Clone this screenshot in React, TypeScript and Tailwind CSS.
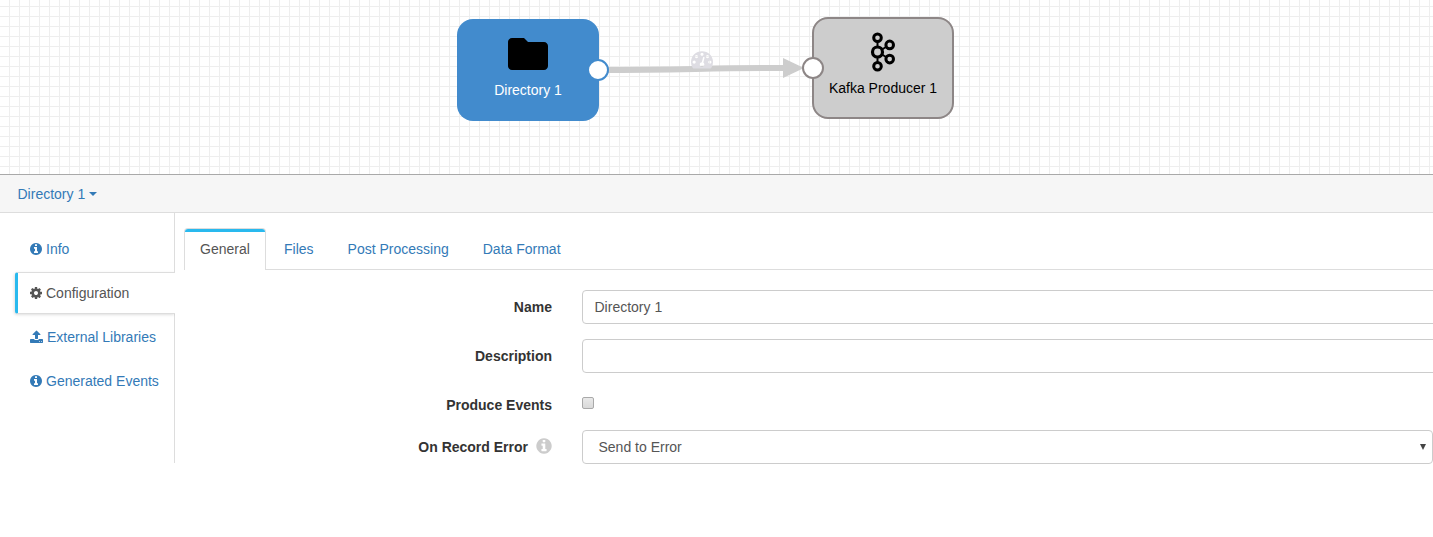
import React from "react";

const ICONS = {
  info: {
    box: "128 0 1536 1792",
    d: "M1152 1376v-160q0-14-9-23t-23-9h-96v-512q0-14-9-23t-23-9h-320q-14 0-23 9t-9 23v160q0 14 9 23t23 9h96v320h-96q-14 0-23 9t-9 23v160q0 14 9 23t23 9h448q14 0 23-9t9-23zm-128-896v-160q0-14-9-23t-23-9h-192q-14 0-23 9t-9 23v160q0 14 9 23t23 9h192q14 0 23-9t9-23zm640 416q0 209-103 385.500t-279.500 279.500-385.500 103-385.500-103-279.500-279.500-103-385.500 103-385.500 279.500-279.500 385.500-103 385.500 103 279.500 279.500 103 385.500z",
  },
  cog: {
    box: "128 0 1536 1792",
    d: "M1152 896q0-106-75-181t-181-75-181 75-75 181 75 181 181 75 181-75 75-181zm512-109v222q0 12-8 23t-20 13l-185 28q-19 54-39 91 35 50 107 138 10 12 10 25t-9 23q-27 37-99 108t-94 71q-12 0-26-9l-138-108q-44 23-91 38-16 136-29 186-7 28-36 28h-222q-14 0-24.500-8.500t-11.500-21.500l-28-184q-49-16-90-37l-141 107q-10 9-25 9-14 0-25-11-126-114-165-168-7-10-7-23 0-12 8-23 15-21 51-66.500t54-70.500q-27-50-41-99l-183-27q-13-2-21-12.500t-8-23.500v-222q0-12 8-23t19-13l186-28q14-46 39-92-40-57-107-138-10-12-10-24 0-10 9-23 26-36 98.500-107.500t94.500-71.500q13 0 26 10l138 107q44-23 91-38 16-136 29-186 7-28 36-28h222q14 0 24.500 8.500t11.500 21.500l28 184q49 16 90 37l142-107q9-9 24-9 13 0 25 10 129 119 165 170 7 8 7 22 0 12-8 23-15 21-51 66.500t-54 70.500q26 50 41 98l183 28q13 2 21 12.500t8 23.500z",
  },
  upload: {
    box: "64 0 1664 1792",
    d: "M1344 1472q0-26-19-45t-45-19-45 19-19 45 19 45 45 19 45-19 19-45zm256 0q0-26-19-45t-45-19-45 19-19 45 19 45 45 19 45-19 19-45zm128-224v320q0 40-28 68t-68 28h-1472q-40 0-68-28t-28-68v-320q0-40 28-68t68-28h427q21 56 70.500 92t110.500 36h256q61 0 110.500-36t70.500-92h427q40 0 68 28t28 68zm-325-648q-17 40-59 40h-256v448q0 26-19 45t-45 19h-256q-26 0-45-19t-19-45v-448h-256q-42 0-59-40-17-39 14-69l448-448q18-19 45-19t45 19l448 448q31 30 14 69z",
  },
  gauge: {
    box: "0 0 1792 1792",
    d: "M384 1152q0-53-37.500-90.500t-90.500-37.500-90.500 37.500-37.500 90.500 37.500 90.500 90.500 37.500 90.500-37.500 37.500-90.500zm192-448q0-53-37.500-90.500t-90.500-37.500-90.500 37.500-37.500 90.500 37.500 90.500 90.500 37.500 90.500-37.500 37.500-90.500zm428 481l101-382q6-26-7.500-48.500t-38.500-29.500-48 6.500-30 39.500l-101 382q-60 5-107 43.500t-63 98.500q-20 77 20 146t117 89 146-20 89-117q16-60-6-117t-72-91zm660-33q0-53-37.500-90.500t-90.500-37.500-90.500 37.500-37.500 90.500 37.500 90.500 90.500 37.500 90.500-37.500 37.500-90.500zm-640-640q0-53-37.500-90.500t-90.500-37.500-90.500 37.500-37.500 90.500 37.500 90.500 90.500 37.500 90.500-37.500 37.500-90.500zm448 192q0-53-37.500-90.500t-90.500-37.500-90.500 37.500-37.500 90.500 37.500 90.500 90.500 37.500 90.500-37.500 37.500-90.500zm320 448q0 261-141 483-19 29-54 29h-1402q-35 0-54-29-141-221-141-483 0-182 71-348t191-286 286-191 348-71 348 71 286 191 191 286 71 348z",
  },
};

function Icon({ name, className }: { name: keyof typeof ICONS; className: string }) {
  return (
    <svg viewBox={ICONS[name].box} className={className} fill="currentColor">
      <path d={ICONS[name].d} />
    </svg>
  );
}

function KafkaIcon() {
  return (
    <svg viewBox="0 0 26 40" className="h-10 w-[26px]" fill="none" stroke="#000">
      <path strokeWidth="2" d="M7.500 9v6M7.500 25v6M12 17.500l4-2.500M12 22.500l4 2.500" />
      <circle cx="7.500" cy="5.700" r="3.800" strokeWidth="3" />
      <circle cx="7.500" cy="20" r="5" strokeWidth="3.200" />
      <circle cx="7.500" cy="34.200" r="3.800" strokeWidth="3" />
      <circle cx="19.700" cy="12.900" r="3.800" strokeWidth="3" />
      <circle cx="19.700" cy="27.100" r="3.800" strokeWidth="3" />
    </svg>
  );
}

function Canvas() {
  return (
    <div className="relative h-[174px] shrink-0 overflow-hidden bg-white bg-[linear-gradient(to_right,transparent_9px,#eeeeee_9px),linear-gradient(to_bottom,transparent_9px,#eeeeee_9px)] bg-[length:10px_10px] bg-[position:0_0,0_-3px]">
      <svg className="absolute left-[598px] top-[50px] h-10 w-[215px]" viewBox="598 50 215 40">
        <path d="M598 70C690 70 700 68 784 68" fill="none" stroke="#cdcdcd" strokeWidth="6" />
        <path d="M783 58L804 68L783 78z" fill="#cdcdcd" />
      </svg>
      <Icon name="gauge" className="absolute left-[691px] top-[48px] h-[22px] w-[22px] text-[#dedde3]" />

      <div className="absolute left-[457px] top-[19px] flex h-[102px] w-[142px] flex-col items-center rounded-[16px] bg-[#428bcd] pt-[11px]">
        <svg viewBox="0 0 24 24" className="h-12 w-12">
          <path d="M10 4H4c-1.100 0-1.990.9-1.990 2L2 18c0 1.100.9 2 2 2h16c1.100 0 2-.9 2-2V8c0-1.100-.9-2-2-2h-8l-2-2z" />
        </svg>
        <span className="mt-[2px] text-white">Directory 1</span>
      </div>
      <span className="absolute left-[587px] top-[59px] h-[22px] w-[22px] rounded-full border-2 border-[#428bcd] bg-white" />

      <div className="absolute left-[812px] top-[17px] flex h-[102px] w-[142px] flex-col items-center rounded-[16px] border-2 border-[#8d8686] bg-[#cdcdcd] pt-[13px] text-black">
        <KafkaIcon />
        <span className="mt-[6px]">Kafka Producer 1</span>
      </div>
      <span className="absolute left-[802px] top-[57px] h-[22px] w-[22px] rounded-full border-2 border-[#8d8686] bg-white" />
    </div>
  );
}

function SideNav() {
  return (
    <nav className="ml-[14px] flex h-[250px] w-[161px] shrink-0 flex-col text-[#337ab7]">
      <a className="flex h-[59px] items-center gap-[4px] border-r border-[#dddddd] pl-4 pt-[13px]">
        <Icon name="info" className="h-[14px] w-3" />Info
      </a>
      <a className="ml-px flex h-[42px] items-center gap-[4px] rounded-l-[3px] border-y border-l-[3px] border-y-[#dddddd] border-l-[#29b9ee] bg-white pl-3 text-[#555555] shadow-[-1px_1px_3px_rgba(0,0,0,0.13)] [clip-path:inset(-4px_0_-4px_-4px)]">
        <Icon name="cog" className="h-[14px] w-3" />Configuration
      </a>
      <div className="flex flex-1 flex-col gap-[4px] border-r border-[#dddddd] pt-[3px]">
        <a className="flex h-10 items-center gap-[4px] whitespace-nowrap pl-4">
          <Icon name="upload" className="h-[14px] w-[13px]" />External Libraries
        </a>
        <a className="flex h-10 items-center gap-[4px] whitespace-nowrap pl-4">
          <Icon name="info" className="h-[14px] w-3" />Generated Events
        </a>
      </div>
    </nav>
  );
}

function Row({ label, height, children }: { label: React.ReactNode; height: string; children: React.ReactNode }) {
  return (
    <div className={"flex " + height}>
      <label className="flex w-[368px] shrink-0 items-center justify-end font-bold text-[#333333]">{label}</label>
      <div className="ml-[30px] flex-1">{children}</div>
    </div>
  );
}

export default function App() {
  return (
    <div className="flex h-[537px] w-full flex-col overflow-hidden bg-white font-['Liberation_Sans',Arial,sans-serif] text-[14px] leading-5">
      <Canvas />
      <header className="flex h-[39px] shrink-0 items-center border-b border-t border-b-[#dddddd] border-t-[#a9a9a9] bg-[#f6f6f6] pl-[17.5px] text-[#337ab7]">
        Directory 1
        <span className="ml-[3.5px] mt-px border-x-4 border-t-4 border-x-transparent border-t-[#337ab7]" />
      </header>
      <div className="flex">
        <SideNav />
        <main className="min-w-0 flex-1 pl-[9px] pt-[15px]">
          <div className="flex h-[42px] border-b border-[#dddddd] text-[#337ab7]">
            <a className="h-[42px] w-[82px] overflow-hidden rounded-t-[4px] border-x border-t border-[#dddddd] bg-white text-center text-[#555555]">
              <span className="block h-[42px] border-t-[3px] border-[#29b9ee] pt-[7px]">General</span>
            </a>
            <a className="ml-[18px] pt-[11px]">Files</a>
            <a className="ml-[34px] pt-[11px]">Post Processing</a>
            <a className="ml-[34px] pt-[11px]">Data Format</a>
          </div>
          <form className="flex flex-col gap-[15px] overflow-hidden pt-5">
            <Row label="Name" height="h-[34px]">
              <input readOnly value="Directory 1" className="h-[34px] w-[900px] rounded-[4px] border border-[#cccccc] px-[11.5px] text-[#555555] outline-none" />
            </Row>
            <Row label="Description" height="h-[34px]">
              <input readOnly className="h-[34px] w-[900px] rounded-[4px] border border-[#cccccc] px-3 outline-none" />
            </Row>
            <Row label={<span className="pt-[7px]">Produce Events</span>} height="h-[27px]">
              <span className="mt-[9px] block h-3 w-3 rounded-[2px] border border-[#a9a9a9] bg-linear-to-b from-[#e9e9e9] to-[#d9d9d9]" />
            </Row>
            <Row
              label={<>On Record Error<Icon name="info" className="mb-[3px] ml-2 h-[18px] w-[16px] text-[#cccccc]" /></>}
              height="h-[34px]"
            >
              <div className="flex h-[34px] items-center justify-between rounded-[4px] border border-[#cccccc] pl-[15.5px] pr-[6px] text-[#555555]">
                Send to Error
                <svg viewBox="0 0 6 6" className="h-[6px] w-[6px]" fill="#444444"><path d="M0 0h6L3 6z" /></svg>
              </div>
            </Row>
          </form>
        </main>
      </div>
    </div>
  );
}
